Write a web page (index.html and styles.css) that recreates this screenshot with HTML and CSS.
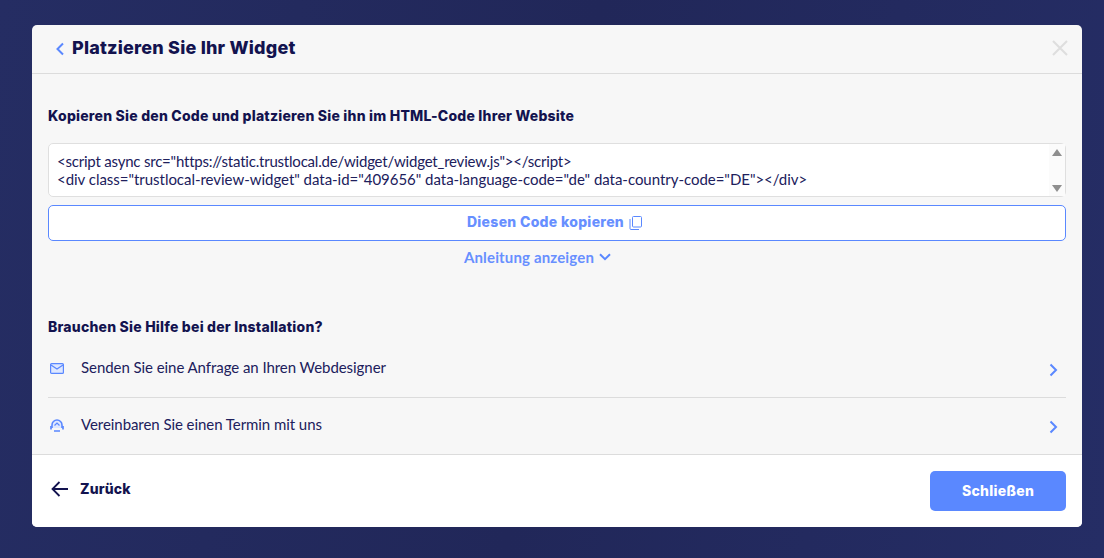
FILE: index.html
```html
<!DOCTYPE html>
<html lang="de">
<head>
<meta charset="utf-8">
<title>Platzieren Sie Ihr Widget</title>
<link rel="stylesheet" href="styles.css">
</head>
<body>
<div class="modal">
  <header class="head">
    <svg class="back" width="10" height="14" viewBox="0 0 10 14"><path d="M8 1.5 2.5 7 8 12.5" fill="none" stroke="#5a88ff" stroke-width="2"/></svg>
    <h1 class="title">Platzieren Sie Ihr Widget</h1>
    <svg class="close" width="16" height="16" viewBox="0 0 16 16"><path d="M1 1l14 14M15 1 1 15" fill="none" stroke="#dedede" stroke-width="2"/></svg>
  </header>
  <main class="content">
    <h2 class="heading first">Kopieren Sie den Code und platzieren Sie ihn im HTML-Code Ihrer Website</h2>
    <div class="code">
      <div class="code-text"><span class="line-one">&lt;script async src="https://static.trustlocal.de/widget/widget_review.js"&gt;&lt;/script&gt;</span><br>&lt;div class="trustlocal-review-widget" data-id="409656" data-language-code="de" data-country-code="DE"&gt;&lt;/div&gt;</div>
      <div class="scroll"><span class="tri up"></span><span class="tri down"></span></div>
    </div>
    <button class="copy">Diesen Code kopieren
      <svg width="13" height="14" viewBox="0 0 13 14"><rect x="3.5" y="0.5" width="9" height="10.5" rx="1" fill="none" stroke="#5a88ff"/><path d="M1 3v9.500a1 1 0 0 0 1 1h8" fill="none" stroke="#5a88ff"/></svg>
    </button>
    <div class="guide">Anleitung anzeigen
      <svg width="12" height="8" viewBox="0 0 12 8"><path d="M1 1.200 6 6.200 11 1.200" fill="none" stroke="#5a88ff" stroke-width="2"/></svg>
    </div>
    <h2 class="heading help">Brauchen Sie Hilfe bei der Installation?</h2>
    <div class="row rule">
      <svg class="ico" width="14" height="11" viewBox="0 0 14 11"><rect x="0.600" y="0.600" width="12.800" height="9.800" rx="1" fill="#dfe8ff" stroke="#5a88ff" stroke-width="1.200"/><path d="M1 2l6 4 6-4" fill="none" stroke="#5a88ff" stroke-width="1.200"/></svg>
      <span class="label">Senden Sie eine Anfrage an Ihren Webdesigner</span>
      <svg class="next" width="9" height="14" viewBox="0 0 9 14"><path d="M1.500 1.500 7 7l-5.500 5.500" fill="none" stroke="#5a88ff" stroke-width="2"/></svg>
    </div>
    <div class="row">
      <svg class="ico" width="14" height="13" viewBox="0 0 14 13"><path d="M2 9V6a5 5 0 0 1 10 0v3" fill="#dfe8ff" stroke="#5a88ff" stroke-width="1.600"/><path d="M1 7v3.500M13 7v3.500M4 12h6" fill="none" stroke="#5a88ff" stroke-width="1.700"/><path d="M4.500 6.500 7 4l2.500 2.500" fill="none" stroke="#5a88ff" stroke-width="1.200"/></svg>
      <span class="label">Vereinbaren Sie einen Termin mit uns</span>
      <svg class="next" width="9" height="14" viewBox="0 0 9 14"><path d="M1.500 1.500 7 7l-5.500 5.500" fill="none" stroke="#5a88ff" stroke-width="2"/></svg>
    </div>
  </main>
  <footer class="foot">
    <div class="return">
      <svg width="18" height="16" viewBox="0 0 18 16"><path d="M17 8H2M8.500 1 1.500 8l7 7" fill="none" stroke="#13134f" stroke-width="1.800"/></svg>
      <span>Zurück</span>
    </div>
    <button class="done">Schließen</button>
  </footer>
</div>
</body>
</html>
```
FILE: styles.css
```css
* { box-sizing: border-box; }
html, body { height: 100%; }
body {
  margin: 0;
  padding: 25px 22px 31px 32px;
  background: linear-gradient(100deg, #252d63 0%, #212759 50%, #252d65 100%);
  font-family: "Lato", "Noto Sans", sans-serif;
  color: #1a1a55;
  overflow: hidden;
}
.modal {
  height: 502px;
  background: #f7f7f7;
  border-radius: 5px;
  display: flex;
  flex-direction: column;
  overflow: hidden;
}
.head {
  height: 49px;
  flex: none;
  display: flex;
  align-items: center;
  padding: 0 14px 2px 23px;
  border-bottom: 1px solid #dcdcdc;
}
.back { margin-right: 7px; margin-top: 2px; }
.title {
  margin: 0 0 2px;
  flex: 1;
  font: 800 18px "Inter", sans-serif;
  letter-spacing: 0.2px;
  color: #13134f;
}
.content { flex: 1; padding: 0 16px; display: flex; flex-direction: column; }
.heading {
  margin: 0;
  font: 800 14px/18px "Inter", sans-serif;
  letter-spacing: 0.22px;
  color: #13134f;
}
.first { margin-top: 33px; }
.code {
  margin-top: 18px;
  height: 54px;
  background: #fff;
  border: 1px solid #dfdfdf;
  border-radius: 5px;
  display: flex;
  justify-content: space-between;
}
.code-text {
  padding: 8px 0 0 8px;
  font-size: 15px;
  line-height: 18px;
  letter-spacing: -0.03px;
  color: #20205c;
  white-space: nowrap;
}
.line-one { letter-spacing: -0.21px; }
.scroll {
  width: 16px;
  background: #fbfbfb;
  display: flex;
  flex-direction: column;
  justify-content: space-between;
  align-items: center;
  padding: 5px 0 4px;
}
.tri { width: 0; height: 0; border-left: 5px solid transparent; border-right: 5px solid transparent; }
.up { border-bottom: 7px solid #8f8f8f; }
.down { border-top: 7px solid #8f8f8f; }
.copy {
  margin-top: 8px;
  height: 36px;
  flex: none;
  background: #fff;
  border: 1px solid #5a88ff;
  border-radius: 5px;
  display: flex;
  justify-content: center;
  align-items: center;
  gap: 5px;
  padding: 0 5px 3px 0;
  font: 800 14px "Inter", sans-serif;
  letter-spacing: 0.3px;
  color: #678fff;
}
.copy svg { margin-top: 3px; }
.guide {
  margin-top: 7px;
  height: 18px;
  display: flex;
  justify-content: center;
  align-items: center;
  gap: 5px;
  padding-right: 39px;
  font-size: 15px;
  font-weight: 700;
  letter-spacing: 0.15px;
  color: #678fff;
}
.help { margin-top: 52px; }
.row {
  height: 55px;
  display: flex;
  align-items: center;
  padding-right: 8px;
  flex: none;
}
.help + .row { margin-top: 4px; }
.rule { height: 58px; border-bottom: 1px solid #dcdcdc; }
.ico { margin-left: 2px; width: 14px; }
.label { flex: 1; margin: 0 0 3px 17px; font-size: 15px; letter-spacing: -0.06px; color: #20205c; }
.next { margin-top: 2px; }
.foot {
  height: 73px;
  flex: none;
  background: #fff;
  border-top: 1px solid #dcdcdc;
  display: flex;
  justify-content: space-between;
  align-items: center;
  padding: 0 16px 0 19px;
}
.return {
  display: flex;
  align-items: center;
  gap: 11px;
  margin-bottom: 5px;
  font: 800 14px "Inter", sans-serif;
  letter-spacing: 0.15px;
  color: #13134f;
}
.done {
  width: 136px;
  height: 40px;
  padding: 0 0 2px;
  background: #5a88ff;
  border: 0;
  border-radius: 5px;
  color: #fff;
  font: 800 14px "Inter", sans-serif;
  letter-spacing: 0.3px;
}
```
